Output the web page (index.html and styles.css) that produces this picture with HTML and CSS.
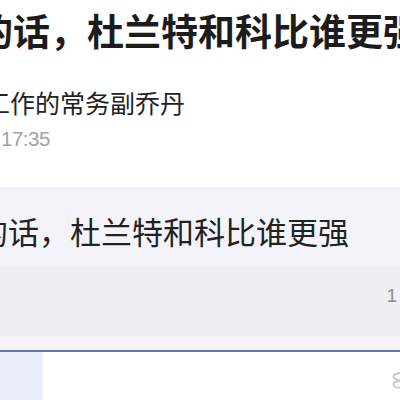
FILE: index.html
```html
<!DOCTYPE html>
<html lang="zh-CN">
<head>
<meta charset="utf-8">
<title>帖子</title>
<link rel="stylesheet" href="styles.css">
</head>
<body>
<div class="page">
  <header class="post">
    <h1 class="title">的话，杜兰特和科比谁更强</h1>
    <div class="author">工作的常务副乔丹</div>
    <div class="time">17:35</div>
  </header>
  <section class="quote">
    <p class="quote-text">的话，杜兰特和科比谁更强</p>
  </section>
  <div class="meta"><span class="count">1</span></div>
  <div class="gap"></div>
  <div class="bottom">
    <aside class="side"></aside>
    <div class="main">
      <svg class="icon" width="10" height="17" viewBox="0 0 10 17">
        <path d="M9.5 1.2 C5 1.2 2.6 2.4 2.6 4.6 C2.6 6.8 5 8 9.5 8" fill="none" stroke="#cacacd" stroke-width="2" stroke-linecap="round"/>
        <path d="M9.5 9 C5 9 2.6 10.2 2.6 12.4 C2.6 14.6 5 15.8 9.5 15.8" fill="none" stroke="#cacacd" stroke-width="2" stroke-linecap="round"/>
      </svg>
    </div>
  </div>
</div>
</body>
</html>
```
FILE: styles.css
```css
html, body {
  margin: 0;
  padding: 0;
  background: #ffffff;
}

body {
  font-family: "Noto Sans CJK SC", "Noto Sans", sans-serif;
  color: #1f1f1f;
}

.page {
  width: 400px;
  height: 400px;
  overflow: hidden;
}

.post {
  height: 187px;
  display: flex;
  flex-direction: column;
  background: #ffffff;
}

.title {
  margin: 8px 0 0 -24px;
  font-size: 37px;
  line-height: 44px;
  font-weight: 700;
  white-space: nowrap;
  color: #1c1c1c;
}

.author {
  margin: 33px 0 0 -15px;
  font-size: 25px;
  line-height: 34px;
  white-space: nowrap;
  color: #222222;
}

.time {
  margin: 6px 0 0 1px;
  font-family: "Liberation Sans", "Noto Sans", sans-serif;
  font-size: 20.5px;
  line-height: 28px;
  letter-spacing: -0.5px;
  color: #a3a3a3;
}

.quote {
  height: 78px;
  background: #f3f3f9;
  box-sizing: border-box;
  padding-top: 24px;
}

.quote-text {
  margin: 0 0 0 -23px;
  font-size: 31px;
  line-height: 40px;
  white-space: nowrap;
  color: #222222;
}

.meta {
  height: 71px;
  background: #eff0f4;
  box-sizing: border-box;
  padding: 18px 3px 0 0;
  display: flex;
  justify-content: flex-end;
}

.count {
  font-family: "Liberation Sans", "Noto Sans", sans-serif;
  font-size: 19px;
  line-height: 26px;
  color: #8a8c92;
}

.gap {
  height: 14px;
  background: #f4f4fa;
  border-bottom: 2px solid #6579a3;
}

.bottom {
  display: flex;
  height: 48px;
}

.side {
  width: 43px;
  background: #e9eef9;
}

.main {
  flex: 1;
  background: #ffffff;
  display: flex;
  justify-content: flex-end;
  align-items: flex-start;
  padding-top: 20px;
}

.icon {
  margin-right: -1px;
}
```
